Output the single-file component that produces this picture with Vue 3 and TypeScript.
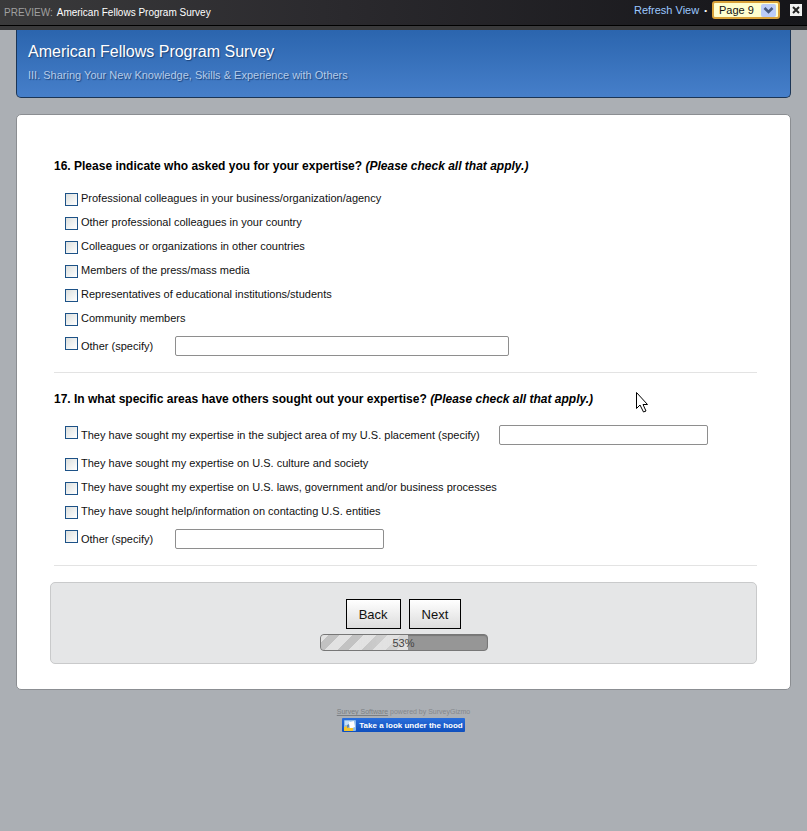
<script setup lang="ts">
import { reactive, ref } from 'vue'

interface Option {
  label: string
  field?: 'wide' | 'narrow'
}

interface Question {
  id: number
  text: string
  options: Option[]
}

const questions: Question[] = [
  {
    id: 16,
    text: 'Please indicate who asked you for your expertise?',
    options: [
      { label: 'Professional colleagues in your business/organization/agency' },
      { label: 'Other professional colleagues in your country' },
      { label: 'Colleagues or organizations in other countries' },
      { label: 'Members of the press/mass media' },
      { label: 'Representatives of educational institutions/students' },
      { label: 'Community members' },
      { label: 'Other (specify)', field: 'wide' },
    ],
  },
  {
    id: 17,
    text: 'In what specific areas have others sought out your expertise?',
    options: [
      { label: 'They have sought my expertise in the subject area of my U.S. placement (specify)', field: 'narrow' },
      { label: 'They have sought my expertise on U.S. culture and society' },
      { label: 'They have sought my expertise on U.S. laws, government and/or business processes' },
      { label: 'They have sought help/information on contacting U.S. entities' },
      { label: 'Other (specify)', field: 'narrow' },
    ],
  },
]

const page = ref(9)
const progress = ref(53)
const answers = reactive<Record<string, string>>({})
const picked = ref<string[]>([])
</script>

<template>
  <div class="page">
    <header class="topbar">
      <p class="preview"><span class="tag">PREVIEW:</span> American Fellows Program Survey</p>
      <nav class="tools">
        <a href="#refresh">Refresh View</a>
        <span class="dot">•</span>
        <span class="picker">
          <select v-model="page" aria-label="Page">
            <option v-for="n in 17" :key="n" :value="n">Page {{ n }}</option>
          </select>
          <svg class="arrow" width="15" height="13" viewBox="0 0 15 13" aria-hidden="true">
            <rect width="15" height="13" rx="2" fill="#bccdf8" />
            <path d="M3.500 4 7.500 8 11.500 4" fill="none" stroke="#44587f" stroke-width="2.600" />
          </svg>
        </span>
        <button class="close" type="button" aria-label="Close">
          <svg width="12" height="12" viewBox="0 0 12 12" aria-hidden="true">
            <path d="M3 3 9 9M9 3 3 9" stroke="#222" stroke-width="2" />
          </svg>
        </button>
      </nav>
    </header>

    <main class="column">
      <section class="banner">
        <h1>American Fellows Program Survey</h1>
        <h2>III. Sharing Your New Knowledge, Skills &amp; Experience with Others</h2>
      </section>

      <form class="card" @submit.prevent>
        <fieldset v-for="q in questions" :key="q.id" class="question">
          <legend>{{ q.id }}. {{ q.text }} <em>(Please check all that apply.)</em></legend>
          <div v-for="(o, i) in q.options" :key="i" class="option" :class="{ specify: o.field }">
            <input :id="`q${q.id}-${i}`" v-model="picked" type="checkbox" :value="`q${q.id}-${i}`" />
            <label :for="`q${q.id}-${i}`">{{ o.label }}</label>
            <input
              v-if="o.field"
              v-model="answers[`q${q.id}-${i}`]"
              type="text"
              :class="o.field"
              :aria-label="o.label"
            />
          </div>
        </fieldset>

        <div class="actions">
          <div class="buttons">
            <button type="button">Back</button>
            <button type="submit">Next</button>
          </div>
          <div class="progress" role="progressbar" :aria-valuenow="progress" aria-valuemin="0" aria-valuemax="100">
            <div class="fill" :style="{ width: progress + '%' }"></div>
            <span>{{ progress }}%</span>
          </div>
        </div>
      </form>

      <footer class="footer">
        <p><a href="#software">Survey Software</a> powered by SurveyGizmo</p>
        <a class="badge" href="#hood">
          <svg width="12" height="11" viewBox="0 0 12 11" aria-hidden="true">
            <rect width="12" height="11" rx="1" fill="#8fbcec" />
            <path d="M1 1h5v4H1z" fill="#c5e0f8" />
            <path d="M5 2l5-1 1 6-5 2z" fill="#fff" />
            <path d="M0 7l3-1 2 2h4v3H0z" fill="#f5c52c" />
            <path d="M3 5l2-1v3l-2 1z" fill="#5e86b8" />
          </svg>
          Take a look under the hood
        </a>
      </footer>
    </main>

    <svg class="pointer" width="14" height="22" viewBox="0 0 14 22" aria-hidden="true">
      <path d="M.5 1.500v16l3.500-3.500 3.500 7 2.500-1-3-6.500h4.500z" fill="#fff" stroke="#000" />
    </svg>
  </div>
</template>

<style>
body {
  background: #abafb4;
}
</style>

<style scoped>
.page {
  position: relative;
  min-height: 100vh;
  background: #abafb4;
  font-family: "Liberation Sans", Arial, sans-serif;
  font-size: 11px;
  color: #111;
}

.topbar {
  box-sizing: border-box;
  height: 30px;
  padding: 0 4px;
  display: flex;
  justify-content: space-between;
  align-items: flex-start;
  background: linear-gradient(to right, #3a3a3b, #2b2a2e 40%, #151519);
  border-bottom: 4px solid #3a3a3b;
  box-shadow: inset 0 -1px #000;
}

.preview {
  display: flex;
  gap: 4px;
  margin: 0;
  font-size: 10px;
  line-height: 26px;
  color: #fff;
}

.tag {
  color: #a0a0a0;
}

.tools {
  display: flex;
  align-items: center;
  height: 20px;
  color: #fff;
}

.tools a {
  color: #9cc8ff;
  text-decoration: none;
}

.dot {
  margin: 0 5px;
  font-size: 8px;
}

.picker {
  display: grid;
  align-items: center;
  margin-right: 10px;
}

.picker select {
  grid-area: 1 / 1;
  appearance: none;
  box-sizing: border-box;
  width: 68px;
  height: 18px;
  padding: 0 20px 0 5px;
  border: 2px solid #d9a23a;
  border-radius: 3px;
  background: #ffffcf;
  font: 11px "Liberation Sans", Arial, sans-serif;
  color: #111;
}

.arrow {
  grid-area: 1 / 1;
  justify-self: end;
  margin-right: 4px;
  pointer-events: none;
}

.close {
  display: flex;
  padding: 0;
  margin-right: 1px;
  border: 0;
  background: #f1f1f1;
}

.column {
  padding: 0 16px;
}

.banner {
  box-sizing: border-box;
  height: 68px;
  padding: 11px 11px 0;
  border: 1px solid #1b3556;
  border-top: 0;
  border-radius: 0 0 5px 5px;
  background: linear-gradient(#2b65ae, #467fca);
  text-shadow: 1px 1px 1px #1c4379;
}

.banner h1 {
  margin: 0;
  font-size: 16px;
  line-height: 22px;
  font-weight: 400;
  color: #fff;
}

.banner h2 {
  margin: 3px 0 0;
  font-size: 11px;
  line-height: 18px;
  font-weight: 400;
  color: #b5cceb;
}

.card {
  margin-top: 16px;
  padding: 25px 33px;
  border: 1px solid #8b8e92;
  border-radius: 5px;
  background: #fff;
}

.question {
  margin: 0 0 0 4px;
  padding: 0 0 10px;
  border: 0;
  border-bottom: 1px solid #e3e3e3;
}

legend {
  padding: 17px 0 11px;
  line-height: 18px;
  font-size: 12px;
  font-weight: 700;
  color: #000;
}

.option {
  display: flex;
  align-items: center;
  height: 24px;
  padding-left: 11px;
}

.option.specify {
  height: 32px;
}

.option label {
  min-width: 75px;
  margin-left: 3px;
}

input[type="checkbox"] {
  appearance: none;
  box-sizing: border-box;
  flex: none;
  width: 13px;
  height: 13px;
  margin: 2px 0 0;
  border: 1px solid #1d5287;
  background: linear-gradient(135deg, #dcdfdd, #fff);
}

.specify input[type="checkbox"] {
  margin: 0 0 5px;
}

input[type="text"] {
  box-sizing: border-box;
  height: 20px;
  margin-left: 19px;
  padding: 0 4px;
  border: 1px solid #8e8e8e;
  border-radius: 2px;
  background: #fff;
  font: inherit;
}

.wide {
  width: 334px;
}

.narrow {
  width: 209px;
}

.question:first-child {
  padding-top: 0;
}

.question:first-child legend {
  padding-top: 17px;
}

.actions {
  margin-top: 16px;
  padding: 16px 0 12px;
  display: flex;
  flex-direction: column;
  align-items: center;
  gap: 5px;
  border: 1px solid #c9cacb;
  border-radius: 5px;
  background: #e5e6e7;
}

.buttons {
  display: flex;
  gap: 8px;
}

.buttons button {
  height: 30px;
  padding: 0 12px;
  border: 1px solid #000;
  border-radius: 0;
  background: linear-gradient(#fff, #dcdcdc);
  font: 13px "Liberation Sans", Arial, sans-serif;
  color: #111;
}

.progress {
  box-sizing: border-box;
  width: 168px;
  height: 17px;
  display: grid;
  align-items: center;
  overflow: hidden;
  border: 1px solid #777;
  border-radius: 4px;
  background: #969696;
  box-shadow: inset 0 1px 1px #777;
}

.fill {
  grid-area: 1 / 1;
  height: 100%;
  background:
    linear-gradient(to right, transparent 40%, rgba(225, 225, 225, 0.7)),
    repeating-linear-gradient(135deg, #e2e2e2 0 5px, #c2c2c2 5px 13px, #e2e2e2 13px 17px);
}

.progress span {
  grid-area: 1 / 1;
  text-align: center;
  color: #444;
}

.footer {
  display: flex;
  flex-direction: column;
  align-items: center;
  padding-top: 15px;
  font-size: 8px;
  color: #85888c;
}

.footer p {
  margin: 0;
  font-size: 7px;
  line-height: 13px;
}

.footer p a {
  color: #7c7f83;
}

.badge {
  display: flex;
  align-items: center;
  gap: 3px;
  height: 14px;
  padding: 0 2px;
  border-radius: 1px;
  background: linear-gradient(#2a6fdc, #0f4fbd);
  font-weight: 700;
  color: #fff;
  text-decoration: none;
  white-space: nowrap;
}

.pointer {
  position: absolute;
  left: 636px;
  top: 391px;
  pointer-events: none;
}
</style>
